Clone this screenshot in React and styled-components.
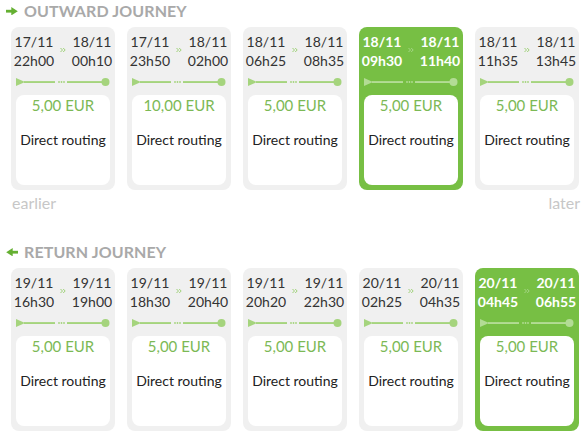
import React from 'react'
import { styled, createGlobalStyle } from 'styled-components'

const Global = createGlobalStyle`
  body {
    margin: 0;
    background: #fff;
    font-family: Lato, "Open Sans", sans-serif;
  }
`

const Page = styled.div`
  width: 587px;
  padding-top: 1px;
`

const Heading = styled.div`
  display: flex;
  align-items: center;
  gap: 6px;
  height: 20px;
  padding-left: 6px;
  margin-top: ${p => p.$first ? '0' : '30px'};
  color: #a9a9a9;
  font-size: 16px;
  font-weight: 700;
  line-height: 20px;
  letter-spacing: 0.1px;
`

const CardRow = styled.div`
  display: grid;
  grid-template-columns: repeat(5, 104px);
  gap: 12px;
  margin: 6px 0 0 11px;
`

const Card = styled.div`
  height: 163px;
  box-sizing: border-box;
  border-radius: 8px;
  background: ${p => p.$selected ? '#77bf44' : '#f0f0f0'};
  padding: 6px 5px 5px;
  display: flex;
  flex-direction: column;
`

const Times = styled.div`
  display: grid;
  grid-template-columns: 1fr 12px 1fr;
  margin: 0 -5px;
  font-size: 14px;
  line-height: 18.5px;
  text-align: center;
  color: ${p => p.$selected ? '#fff' : '#333'};
  font-weight: ${p => p.$selected ? 700 : 400};
`

const Chevron = styled.svg`
  grid-column: 2;
  grid-row: 1 / span 2;
  align-self: center;
  justify-self: center;
  margin-top: -4px;
`

const Line = styled.svg`
  display: block;
  margin-top: 7px;
`

const Body = styled.div`
  flex: 1;
  margin-top: 8px;
  background: #fff;
  border-radius: 8px;
  padding-top: 1px;
  text-align: center;
  font-size: 14px;
  line-height: 18px;
`

const Price = styled.div`
  color: #7cb955;
  font-size: 15px;
`

const Routing = styled.div`
  color: #222;
  margin-top: 17px;
`

const Nav = styled.div`
  display: flex;
  justify-content: space-between;
  margin-top: 4px;
  padding: 0 7px 0 12px;
  color: #c7c7c7;
  font-size: 16px;
  line-height: 18px;
`

const Arrow = ({ left }) => (
  <svg width="12" height="8" viewBox="0 0 12 8" style={left ? { transform: 'scaleX(-1)' } : undefined}>
    <rect x="0" y="2.8" width="7" height="2.8" fill="#65b032" />
    <path d="M5.3 0 L11.8 4.2 L5.3 8.4 Z" fill="#65b032" />
  </svg>
)

const Track = ({ selected }) => {
  const c = selected ? '#b3dc95' : '#a5d47d'
  return (
    <Line width="94" height="10" viewBox="0 0 94 10">
      <path d="M0 1 L9 5 L0 9 Z" fill={c} />
      <rect x="8" y="4.1" width="31" height="1.9" fill={c} />
      <circle cx="43" cy="5" r="0.9" fill={c} />
      <circle cx="45.5" cy="5" r="0.9" fill={c} />
      <circle cx="48" cy="5" r="0.9" fill={c} />
      <rect x="51" y="4.1" width="36" height="1.9" fill={c} />
      <circle cx="89.5" cy="5" r="4" fill={c} />
    </Line>
  )
}

const Marks = ({ selected }) => (
  <Chevron width="6" height="6" viewBox="0 0 6 6">
    <path d="M0.5 1 L2.5 3 L0.5 5 M3.2 1 L5.2 3 L3.2 5" fill="none"
      stroke={selected ? '#a6d685' : '#9dd077'} strokeWidth="1" />
  </Chevron>
)

const outward = [
  ['17/11', '22h00', '18/11', '00h10', '5,00 EUR'],
  ['17/11', '23h50', '18/11', '02h00', '10,00 EUR'],
  ['18/11', '06h25', '18/11', '08h35', '5,00 EUR'],
  ['18/11', '09h30', '18/11', '11h40', '5,00 EUR', true],
  ['18/11', '11h35', '18/11', '13h45', '5,00 EUR'],
]

const back = [
  ['19/11', '16h30', '19/11', '19h00', '5,00 EUR'],
  ['19/11', '18h30', '19/11', '20h40', '5,00 EUR'],
  ['19/11', '20h20', '19/11', '22h30', '5,00 EUR'],
  ['20/11', '02h25', '20/11', '04h35', '5,00 EUR'],
  ['20/11', '04h45', '20/11', '06h55', '5,00 EUR', true],
]

const Trip = ({ d1, t1, d2, t2, price, selected }) => (
  <Card $selected={selected}>
    <Times $selected={selected}>
      <span>{d1}</span>
      <Marks selected={selected} />
      <span>{d2}</span>
      <span>{t1}</span>
      <span>{t2}</span>
    </Times>
    <Track selected={selected} />
    <Body>
      <Price>{price}</Price>
      <Routing>Direct routing</Routing>
    </Body>
  </Card>
)

const Row = ({ items }) => (
  <CardRow>
    {items.map((r, i) => (
      <Trip key={i} d1={r[0]} t1={r[1]} d2={r[2]} t2={r[3]} price={r[4]} selected={!!r[5]} />
    ))}
  </CardRow>
)

const App = () => (
  <Page>
    <Global />
    <Heading $first>
      <Arrow />
      OUTWARD JOURNEY
    </Heading>
    <Row items={outward} />
    <Nav>
      <span>earlier</span>
      <span>later</span>
    </Nav>
    <Heading>
      <Arrow left />
      RETURN JOURNEY
    </Heading>
    <Row items={back} />
  </Page>
)

export default App
